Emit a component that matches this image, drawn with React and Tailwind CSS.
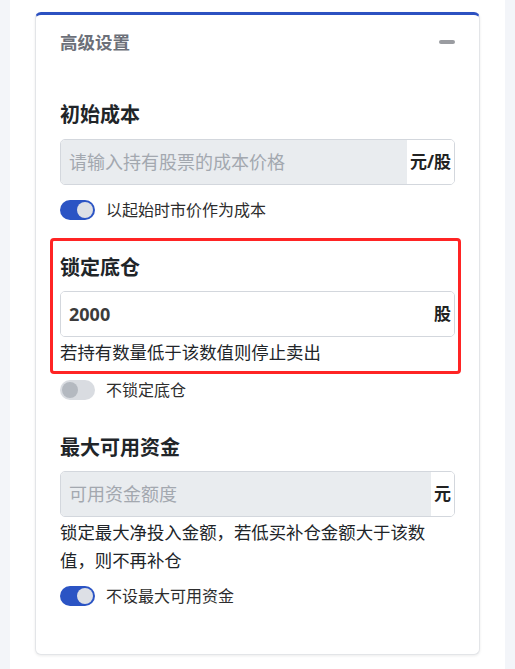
import React from "react";

const Toggle = ({ on }) => (
  <div
    className={`w-[35px] h-[20px] rounded-full p-[2px] flex ${
      on ? "bg-[#2b54c4] justify-end" : "bg-[#d9dce1] justify-start"
    }`}
  >
    <div
      className={`w-[16px] h-[16px] rounded-full ${
        on ? "bg-[#dde0e6]" : "bg-[#b4b9c0]"
      }`}
    />
  </div>
);

const ToggleRow = ({ on, label, className = "" }) => (
  <div className={`flex items-center gap-[11px] h-[20px] ${className}`}>
    <Toggle on={on} />
    <span className="text-[16px] text-[#2d2d2d]">{label}</span>
  </div>
);

const InputGroup = ({ value, placeholder, unit, disabled }) => (
  <div className="flex h-[46px] border border-[#d3d7dd] rounded-[5px] overflow-hidden">
    <input
      readOnly
      value={value}
      placeholder={placeholder}
      className={`flex-1 min-w-0 px-[8px] text-[18px] outline-none placeholder:text-[#a3a8af] ${
        disabled ? "bg-[#e9ecef]" : "bg-white font-bold text-[#3b3b3b]"
      }`}
    />
    <div className="flex items-center px-[3px] bg-white text-[17px] font-bold text-[#222]">
      {unit}
    </div>
  </div>
);

const Title = ({ children, className = "" }) => (
  <h4 className={`text-[20px] leading-[27px] font-bold text-[#212529] ${className}`}>
    {children}
  </h4>
);

export default function App() {
  return (
    <div className="min-h-screen bg-[#f3f5f9] px-[10px] font-['Noto_Sans','Noto_Sans_CJK_SC',sans-serif]">
      <div className="bg-white min-h-[669px] px-[25px] pt-[12px]">
        <div className="bg-white rounded-[6px] border border-[#e3e5e8] border-t-[3px] border-t-[#2c51c1] shadow-[0_1px_3px_rgba(0,0,0,0.08)]">
          {/* header */}
          <div className="h-[54px] px-[24px] flex items-center justify-between">
            <span className="text-[17.5px] font-bold text-[#6c7079]">
              高级设置
            </span>
            <div className="w-[16px] h-[4px] rounded-full bg-[#9a9ca1]" />
          </div>

          <div className="px-[24px] pt-[32px] pb-[48px]">
            {/* 初始成本 */}
            <Title className="mb-[11px]">初始成本</Title>
            <InputGroup placeholder="请输入持有股票的成本价格" unit="元/股" disabled />
            <ToggleRow on label="以起始时市价作为成本" className="mt-[15px]" />

            {/* 锁定底仓 */}
            <div className="mt-[18px] -ml-[10px] -mr-[6px] border-[3px] border-[#ff2424] rounded-[4px] pl-[7px] pr-[3px] pt-[13px] pb-[5px]">
              <Title className="mb-[10px]">锁定底仓</Title>
              <InputGroup value="2000" unit="股" />
              <p className="mt-[1px] text-[17.4px] leading-[28px] text-[#212529]">
                若持有数量低于该数值则停止卖出
              </p>
            </div>
            <ToggleRow label="不锁定底仓" className="mt-[6px]" />

            {/* 最大可用资金 */}
            <Title className="mt-[34px] mb-[10px]">最大可用资金</Title>
            <InputGroup placeholder="可用资金额度" unit="元" disabled />
            <p className="mt-[1px] text-[17.4px] leading-[28px] text-[#212529]">
              锁定最大净投入金额，若低买补仓金额大于该数值，则不再补仓
            </p>
            <ToggleRow on label="不设最大可用资金" className="mt-[12px]" />
          </div>
        </div>
      </div>
    </div>
  );
}
